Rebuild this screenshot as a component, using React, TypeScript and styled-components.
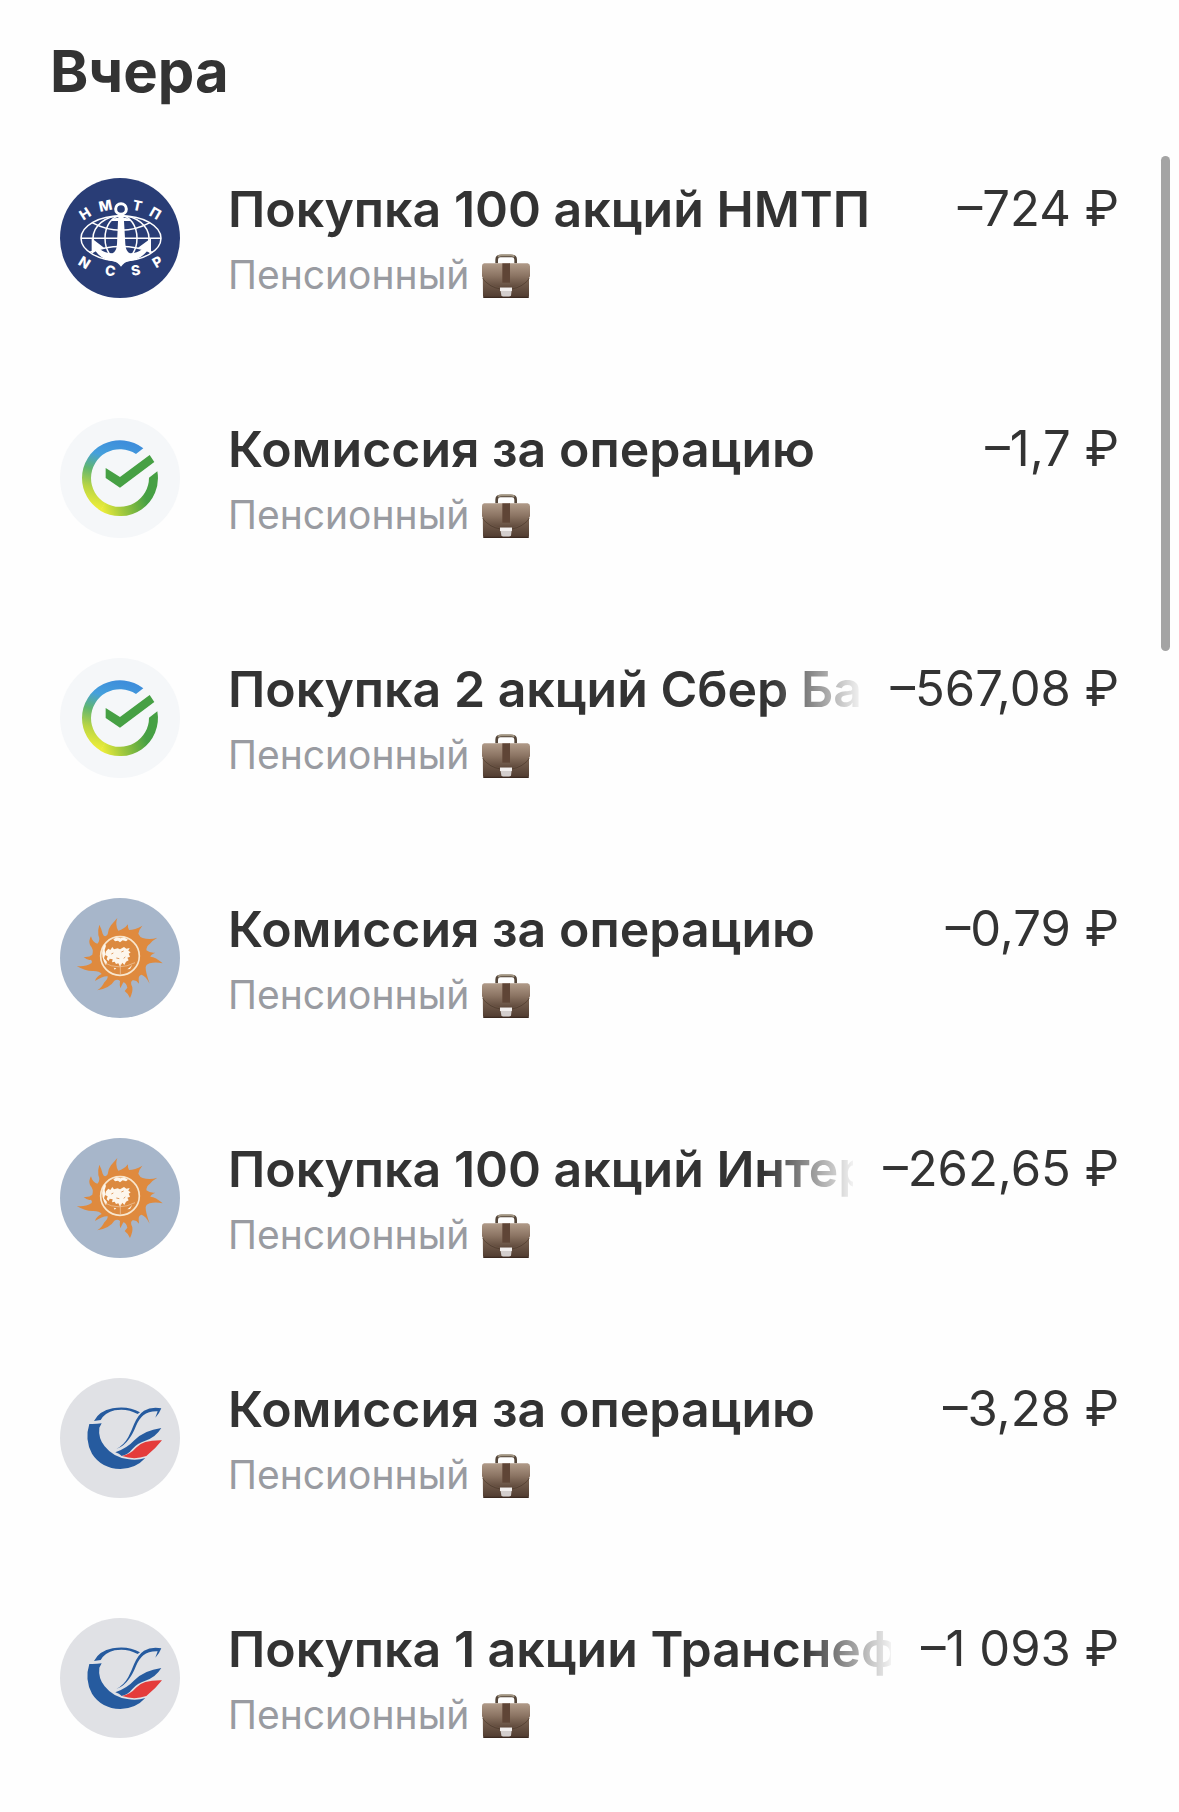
import React from 'react';
import styled, { createGlobalStyle } from 'styled-components';

const GlobalStyle = createGlobalStyle`
  * { box-sizing: border-box; }
  body {
    margin: 0;
    background: #fefefe;
    color: #333333;
    font-family: Inter, "Noto Sans", sans-serif;
  }
`;

const Page = styled.main`
  position: relative;
  padding: 36px 60px 14px 50px;
`;

const Heading = styled.h1`
  margin: 0 0 12px;
  font-size: 58px;
  line-height: 70px;
  font-weight: 700;
`;

const List = styled.ul`
  margin: 0;
  padding: 0;
  list-style: none;
`;

const Row = styled.li`
  display: flex;
  align-items: center;
  gap: 48px;
  height: 240px;
  padding-left: 10px;
`;

const Avatar = styled.svg`
  flex: none;
  width: 120px;
  height: 120px;
`;

const Details = styled.div`
  flex: 1;
  min-width: 0;
  padding-top: 8px;
`;

const TitleLine = styled.div`
  display: flex;
  gap: 30px;
  line-height: 64px;
  white-space: nowrap;
`;

const Title = styled.span<{ $faded: boolean }>`
  flex: 1;
  min-width: 0;
  overflow: hidden;
  font-size: 50px;
  font-weight: 600;
  mask-image: ${(p) =>
    p.$faded
      ? 'linear-gradient(to left, rgba(0, 0, 0, 0.06), #000 88px)'
      : 'none'};
`;

const Amount = styled.span`
  flex: none;
  font-size: 49px;
`;

const Account = styled.div`
  display: flex;
  align-items: center;
  gap: 12px;
  height: 66px;
  font-size: 39px;
  color: #999ba1;
`;

const CaseIcon = styled.svg`
  flex: none;
  width: 50px;
  height: 48px;
`;

const ScrollThumb = styled.div`
  position: absolute;
  top: 156px;
  right: 9px;
  width: 9px;
  height: 495px;
  border-radius: 5px;
  background: #a4a4a4;
`;

function Briefcase() {
  return (
    <CaseIcon viewBox="4 -2 150 144" aria-hidden="true">
      <defs>
        <linearGradient id="leather" x1="0" y1="0" x2="0" y2="1">
          <stop offset="0" stopColor="#a18a78" />
          <stop offset="0.45" stopColor="#7a6352" />
          <stop offset="1" stopColor="#4f3b30" />
        </linearGradient>
        <linearGradient id="flap" x1="0" y1="0" x2="0" y2="1">
          <stop offset="0" stopColor="#b09a88" />
          <stop offset="0.5" stopColor="#8b7463" />
          <stop offset="1" stopColor="#5c4638" />
        </linearGradient>
      </defs>
      <path d="M51 38V27Q51 16 62 16H97Q108 16 108 27V38" fill="none" stroke="#54463a" strokeWidth="8" />
      <path d="M55 18Q59 14 66 14H93Q100 14 104 18" fill="none" stroke="#a39682" strokeWidth="6" />
      <path d="M9 42H148V136Q148 142 142 142H16Q10 142 10 136Z" fill="url(#leather)" />
      <path d="M13 38H144Q151 39 151 47V77Q149 85 139 91Q116 111 79 113Q41 111 20 91Q9 84 7 77V47Q7 39 13 38Z" fill="url(#flap)" />
      <path d="M9 82Q12 90 22 97Q44 116 79 116Q114 116 136 97Q146 90 149 82" fill="none" stroke="#46332799" strokeWidth="3" />
      <path d="M68 38H91V96H68Z" fill="#5f4536" />
      <path d="M61 111H97L94 134Q93 138 88 138H71Q66 138 65 134Z" fill="#d3cecd" />
      <path d="M61 111H97V121H61Z" fill="#f2efee" />
      <path d="M11 138H147V142H11Z" fill="#3c2a21" />
    </CaseIcon>
  );
}

const portLetters: [string, number, number, number][] = [
  ['Н', 105, 137, -32],
  ['М', 166, 113, -12],
  ['Т', 262, 113, 12],
  ['П', 316, 136, 30],
  ['N', 103, 284, 32],
  ['C', 181, 308, 8],
  ['S', 257, 307, -10],
  ['P', 322, 282, -30],
];

function PortLogo() {
  return (
    <>
      <circle cx="210" cy="210" r="180" fill="#293d76" />
      <g fill="none" stroke="#fff" strokeWidth="4.5">
        <ellipse cx="213" cy="211" rx="120" ry="68" />
        <ellipse cx="213" cy="211" rx="84" ry="68" />
        <ellipse cx="213" cy="211" rx="48" ry="68" />
        <path d="M93 211H333M126 164Q213 210 300 164M118 253Q213 218 308 253" />
      </g>
      <circle cx="213" cy="123" r="16" fill="#293d76" stroke="#fff" strokeWidth="9" />
      <path
        fill="#fff"
        d="M206 138H220L221 149Q232 150 240 153V159H222L226 228Q228 253 240 256Q262 256 276 244L264 239L303 211V257L291 250Q270 275 238 279Q222 283 213 296Q204 283 188 279Q155 275 137 250L125 257V211L162 239L150 244Q165 256 187 256Q199 253 201 228L204 159H186V153Q194 150 205 149Z"
      />
      <g fill="#fff" fontFamily="Inter, sans-serif" fontSize="42" fontWeight="800" textAnchor="middle">
        {portLetters.map(([letter, x, y, angle]) => (
          <text key={letter} transform={`translate(${x} ${y}) rotate(${angle})`} y="15">
            {letter}
          </text>
        ))}
      </g>
    </>
  );
}

function BankLogo() {
  return (
    <>
      <defs>
        <linearGradient id="bankLeft" gradientUnits="userSpaceOnUse" x1="210" y1="100" x2="150" y2="315">
          <stop offset="0" stopColor="#3e8edb" />
          <stop offset="0.24" stopColor="#45a0dc" />
          <stop offset="0.46" stopColor="#61b66e" />
          <stop offset="0.7" stopColor="#b9d544" />
          <stop offset="0.94" stopColor="#ebec39" />
        </linearGradient>
        <linearGradient id="bankRight" gradientUnits="userSpaceOnUse" x1="155" y1="300" x2="285" y2="260">
          <stop offset="0" stopColor="#ebec39" />
          <stop offset="0.45" stopColor="#9bc63e" />
          <stop offset="1" stopColor="#46a044" />
        </linearGradient>
      </defs>
      <circle cx="210" cy="210" r="180" fill="#f5f7f9" />
      <path
        fill="url(#bankLeft)"
        d="M280 121A114 114 0 0 0 96 210A114 114 0 0 0 152 308L166 285A87 87 0 0 1 123 210A87 87 0 0 1 258 138Z"
      />
      <path
        fill="url(#bankRight)"
        d="M165 284A87 87 0 0 0 297 209L322 190A114 114 0 0 1 151 308Z"
      />
      <path fill="#46a044" d="M167 180L210 207L299 141L313 162L210 239L167 210Z" />
    </>
  );
}

function SunLogo() {
  return (
    <>
      <circle cx="210" cy="210" r="180" fill="#a7b6ca" />
      <path
        fill="#df8a3e"
        d="M202 90Q194 110 205 128Q222 124 234 109Q232 119 237 126Q254 126 277 113Q266 126 265 137Q270 148 278 150Q300 156 322 149Q306 158 300 167Q289 174 289 187Q300 196 316 194Q302 200 301 206Q317 207 338 226Q316 221 299 226Q288 229 287 238Q286 251 299 287Q288 265 275 260Q266 261 266 273L267 287Q258 275 248 277Q239 282 247 298Q249 312 240 330Q235 317 224 309L232 299Q229 285 220 283L211 301Q208 293 210 279Q203 272 193 278Q181 299 142 307Q158 295 162 284Q174 273 173 265Q160 263 135 279Q139 265 155 258Q149 249 130 249Q107 250 80 234Q106 237 125 225Q128 218 122 215Q113 218 101 207Q118 209 127 200Q132 184 120 171Q115 158 123 145Q128 165 142 167Q152 158 145 141Q143 126 148 110Q154 121 158 137Q164 151 173 139Q174 123 183 112Z"
      />
      <circle cx="210" cy="204" r="58" fill="#dc8a40" stroke="#f8e6cd" strokeWidth="5" />
      <path
        fill="#fdf6ec"
        d="M168 190L175 182L181 186L187 177L192 184L203 181L210 184L222 177L229 182L239 180L235 188L242 193L236 197L240 206L232 209L236 217L228 221L223 231L217 224L210 236L205 226L198 228L194 221L186 223L188 214L179 212L176 219L170 214L173 205L165 201Z"
      />
      <path
        fill="#fdf6ec"
        d="M190 154L200 148L212 151L222 148L234 155L228 160L218 157L210 163L204 158L195 160ZM158 181L164 168L168 173L164 186L166 198L162 211L171 222L168 232Q152 208 158 181ZM232 244L238 239L247 230L240 243ZM191 239L199 241L194 245Z"
      />
      <path d="M162 224Q206 249 255 224M211 229V260" fill="none" stroke="#f1cfaa" strokeWidth="2" />
      <path d="M184 198L190 195M214 192L221 189M199 210L208 212M221 211L226 207" stroke="#df9a5e" strokeWidth="3" />
    </>
  );
}

function PipelineLogo() {
  return (
    <>
      <circle cx="210" cy="210" r="180" fill="#e0e1e5" />
      <path
        fill="#265b9f"
        d="M132 159Q147 129 188 121Q235 113 270 133L263 138Q230 120 194 127Q165 134 152 156Z"
      />
      <path
        fill="#265b9f"
        d="M118 168Q137 169 155 166L148 179Q144 210 164 235Q190 268 232 273Q260 279 286 270Q257 302 211 303Q154 301 126 257Q103 215 118 168Z"
      />
      <path
        fill="#265b9f"
        d="M199 243Q222 231 235 207Q244 190 252 169Q263 141 282 128Q303 116 334 121Q328 137 316 149L323 130Q296 129 280 142Q267 153 258 174Q248 199 237 213Q221 236 199 243Z"
      />
      <path
        fill="#265b9f"
        d="M196 253Q231 241 253 217Q282 187 334 180Q317 208 286 218Q262 225 247 243Q234 260 215 264Q208 257 196 253Z"
      />
      <path
        fill="#e43c3b"
        d="M216 264Q243 257 258 239Q278 216 336 217Q317 242 289 264Q253 277 216 264Z"
      />
    </>
  );
}

const logos = { port: PortLogo, bank: BankLogo, sun: SunLogo, pipeline: PipelineLogo };

interface Operation {
  logo: keyof typeof logos;
  title: string;
  amount: string;
  faded?: boolean;
}

const operations: Operation[] = [
  { logo: 'port', title: 'Покупка 100 акций НМТП', amount: '–724 ₽' },
  { logo: 'bank', title: 'Комиссия за операцию', amount: '–1,7 ₽' },
  { logo: 'bank', title: 'Покупка 2 акций Сбер Ба', amount: '–567,08 ₽', faded: true },
  { logo: 'sun', title: 'Комиссия за операцию', amount: '–0,79 ₽' },
  { logo: 'sun', title: 'Покупка 100 акций Интер', amount: '–262,65 ₽', faded: true },
  { logo: 'pipeline', title: 'Комиссия за операцию', amount: '–3,28 ₽' },
  { logo: 'pipeline', title: 'Покупка 1 акции Транснеф', amount: '–1 093 ₽', faded: true },
];

export default function App() {
  return (
    <Page>
      <GlobalStyle />
      <Heading>Вчера</Heading>
      <List>
        {operations.map(({ logo, title, amount, faded = false }, index) => {
          const Logo = logos[logo];
          return (
            <Row key={index}>
              <Avatar viewBox="30 30 360 360" aria-hidden="true">
                <Logo />
              </Avatar>
              <Details>
                <TitleLine>
                  <Title $faded={faded}>{title}</Title>
                  <Amount>{amount}</Amount>
                </TitleLine>
                <Account>
                  Пенсионный
                  <Briefcase />
                </Account>
              </Details>
            </Row>
          );
        })}
      </List>
      <ScrollThumb />
    </Page>
  );
}
